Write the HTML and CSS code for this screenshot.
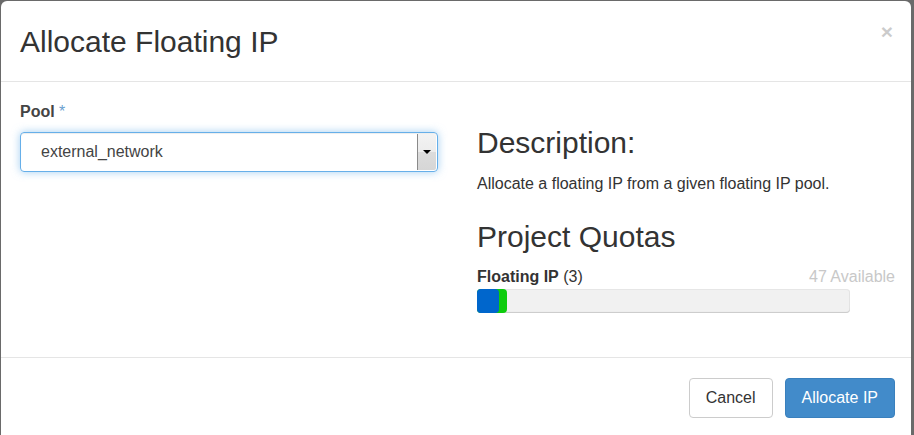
FILE: index.html
```html
<!DOCTYPE html>
<html>
<head>
<meta charset="utf-8">
<link rel="stylesheet" href="styles.css">
</head>
<body>
<div class="modal">
  <div class="modal-header">
    <h4 class="modal-title">Allocate Floating IP</h4>
    <span class="close">&times;</span>
  </div>
  <div class="modal-body">
    <div class="col-left">
      <label class="field-label">Pool <span class="req">*</span></label>
      <div class="select">
        <span class="select-text">external_network</span>
        <span class="select-arrow"><span class="tri"></span></span>
      </div>
    </div>
    <div class="col-right">
      <h3 class="heading first">Description:</h3>
      <p class="desc">Allocate a floating IP from a given floating IP pool.</p>
      <h3 class="heading">Project Quotas</h3>
      <div class="quota-row">
        <span class="quota-label"><strong>Floating IP</strong> (3)</span>
        <span class="quota-avail">47 Available</span>
      </div>
      <div class="bar">
        <div class="bar-new" style="width: 8%"></div>
        <div class="bar-used" style="width: 6%"></div>
      </div>
    </div>
  </div>
  <div class="modal-footer">
    <button class="btn btn-default">Cancel</button>
    <button class="btn btn-primary">Allocate IP</button>
  </div>
</div>
</body>
</html>
```
FILE: styles.css
```css
html, body {
  margin: 0;
  padding: 0;
}
body {
  background: #6a6a6a;
  font-family: "Liberation Sans", Arial, Helvetica, sans-serif;
  color: #333;
  overflow: hidden;
}
.modal {
  margin: 1px 0 0 1px;
  width: 910px;
  min-height: 440px;
  background: #fff;
  border-radius: 6px 6px 0 0;
}
.modal-header {
  display: flex;
  justify-content: space-between;
  align-items: flex-start;
  padding: 24px 18px 23px 19px;
  border-bottom: 1px solid #e5e5e5;
}
.modal-title {
  margin: 0;
  font-size: 30px;
  line-height: 33px;
  font-weight: normal;
  color: #333;
}
.close {
  font-size: 21px;
  font-weight: bold;
  line-height: 1;
  color: #000;
  opacity: 0.2;
  margin-top: -4px;
}
.modal-body {
  box-sizing: border-box;
  height: 275px;
  padding: 20px 19px 0;
  display: grid;
  grid-template-columns: 418px 418px;
  column-gap: 39px;
  align-items: start;
}
.field-label {
  display: block;
  font-size: 16px;
  line-height: 20px;
  font-weight: bold;
  color: #444;
  margin-bottom: 10px;
}
.req {
  color: #6a9fd0;
  font-weight: normal;
}
.select {
  box-sizing: border-box;
  height: 40px;
  border: 1px solid #66afe9;
  border-radius: 4px;
  box-shadow: inset 0 1px 1px rgba(0,0,0,.075), 0 0 8px rgba(102,175,233,.6);
  display: flex;
  align-items: center;
  padding: 1px 1px 1px 20px;
}
.select-text {
  flex: 1;
  font-size: 16px;
  color: #444;
}
.select-arrow {
  box-sizing: border-box;
  width: 19px;
  align-self: stretch;
  border-left: 1px solid #8a8a8a;
  border-radius: 0 2px 2px 0;
  background: linear-gradient(#f3f3f3 0%, #ececec 50%, #dcdcdc 50%, #d6d6d6 100%);
  display: flex;
  align-items: center;
  justify-content: center;
}
.tri {
  width: 0;
  height: 0;
  border-left: 4px solid transparent;
  border-right: 4px solid transparent;
  border-top: 4px solid #000;
}
.heading {
  margin: 26px 0 0;
  font-size: 30px;
  line-height: 33px;
  font-weight: normal;
  color: #333;
}
.heading.first {
  margin-top: 24px;
}
.desc {
  margin: 15px 0 0;
  font-size: 16px;
  line-height: 20px;
  color: #333;
}
.quota-row {
  margin-top: 14px;
  display: flex;
  justify-content: space-between;
  font-size: 16px;
  line-height: 20px;
}
.quota-label strong {
  color: #333;
}
.quota-avail {
  color: #c8c8c8;
}
.bar {
  position: relative;
  margin-top: 2px;
  width: 373px;
  height: 24px;
  background: #f1f1f1;
  border-radius: 4px;
  box-shadow: inset 0 -1px 1px rgba(0,0,0,.12), inset 0 0 0 1px #e6e6e6;
}
.bar-used,
.bar-new {
  position: absolute;
  left: 0;
  top: 0;
  bottom: 0;
  border-radius: 4px;
}
.bar-new {
  background: #0dcc0d;
}
.bar-used {
  background: #0066cc;
}
.modal-footer {
  border-top: 1px solid #e5e5e5;
  padding: 20px 16px;
  display: flex;
  justify-content: flex-end;
  gap: 12px;
}
.btn {
  font-family: inherit;
  font-size: 16px;
  line-height: 20px;
  padding: 9px 16px;
  border: 1px solid transparent;
  border-radius: 4px;
  margin: 0;
}
.btn-default {
  background: #fff;
  border-color: #ccc;
  color: #333;
}
.btn-primary {
  background: #428bca;
  border-color: #3a80bd;
  color: #fff;
}
```
